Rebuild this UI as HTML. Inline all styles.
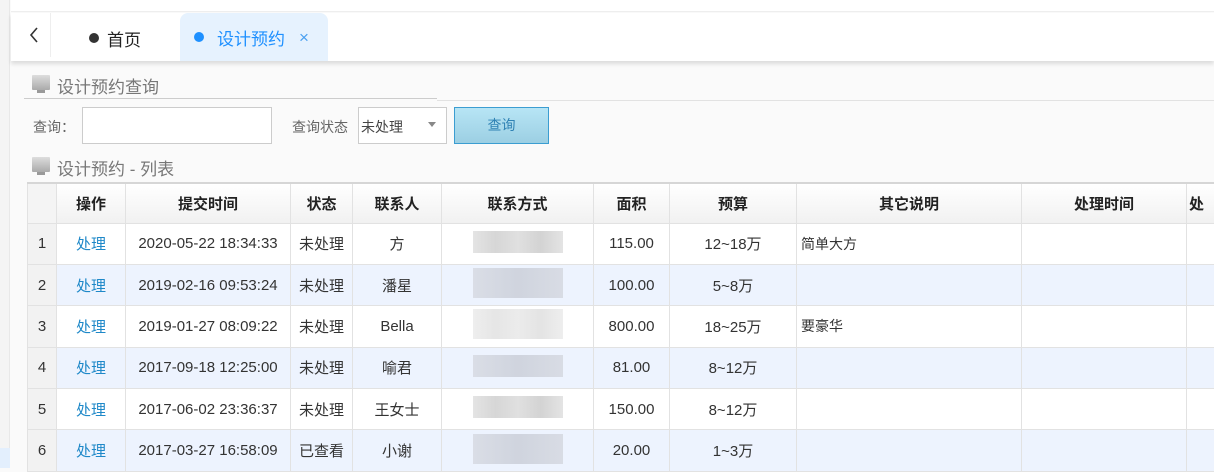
<!DOCTYPE html><html><head><meta charset="utf-8"><style>
*{margin:0;padding:0;box-sizing:border-box}
body{width:1214px;height:468px;overflow:hidden;background:#fafafa;font-family:"Liberation Sans","Noto Sans CJK SC",sans-serif;position:relative;font-size:14px;color:#333}
.a{position:absolute}
.ic{position:absolute;width:18px;height:15px;background:linear-gradient(#ddd,#aaa);border-radius:1px}
.ic:after{content:"";position:absolute;left:5px;top:15px;width:8px;height:3px;background:#999}
table{position:absolute;left:27px;top:182px;border-collapse:collapse;table-layout:fixed;width:1200px;background:#fff}
td,th{border:1px solid #e2e2e2;text-align:center;white-space:nowrap;overflow:hidden;font-size:15px}
th{height:40px;background:linear-gradient(#fff,#f1f1f1);font-weight:bold;color:#222;border-top:2px solid #d6d6d6;font-size:15px}
td{height:41.4px;color:#333}
tr.e td{background:#edf3fe}
td.n{background:#f2f2f2!important}
td.l{color:#1e88c8}
td.t{text-align:left;padding-left:4px;font-size:14px}
.bl{display:inline-block;width:90px;height:22px;background:linear-gradient(90deg,#ddd,#ccc,#d8d8d8,#c8c8c8,#ddd);opacity:.8}
tr.e .bl{background:linear-gradient(90deg,#d5d8e0,#c8ccd6,#d3d6de)}
</style></head><body>
<div class="a" style="left:0;top:0;width:10px;height:468px;background:#f4f4f4;border-right:1px solid #e8e8e8"></div>
<div class="a" style="left:0;top:448px;width:10px;height:20px;background:#e3effd"></div>
<div class="a" style="left:11px;top:0;width:1203px;height:12px;background:#fff;border-bottom:1px solid #eee"></div>
<div class="a" style="left:11px;top:13px;width:1203px;height:48px;background:#fff;box-shadow:0 3px 4px rgba(0,0,0,.12)"></div>
<div class="a" style="left:50px;top:13px;width:1px;height:44px;background:#eee"></div>
<svg class="a" style="left:28px;top:27px" width="12" height="16"><path d="M9 1L3 8l6 7" fill="none" stroke="#333" stroke-width="1.6"/></svg>
<div class="a" style="left:89px;top:33px;width:10px;height:10px;border-radius:50%;background:#333"></div>
<div class="a" style="left:107px;top:26px;font-size:17px;color:#222">首页</div>
<div class="a" style="left:180px;top:13px;width:148px;height:48px;background:#e6f2fe;border-radius:8px 8px 0 0"></div>
<div class="a" style="left:194px;top:32px;width:10px;height:10px;border-radius:50%;background:#1e90ff"></div>
<div class="a" style="left:217px;top:25px;font-size:17px;color:#1e90ff">设计预约</div>
<div class="a" style="left:299px;top:28px;font-size:17px;color:#4aa0f0">×</div>
<div class="ic" style="left:32px;top:75px"></div>
<div class="a" style="left:57px;top:73px;font-size:17px;color:#777">设计预约查询</div>
<div class="a" style="left:24px;top:98px;width:413px;height:1px;background:#ccc"></div>
<div class="a" style="left:437px;top:100px;width:777px;height:1px;background:#e2e2e2"></div>
<div class="a" style="left:33px;top:117px;color:#666;font-size:14px">查询：</div>
<div class="a" style="left:82px;top:107px;width:190px;height:37px;background:#fff;border:1px solid #ccc"></div>
<div class="a" style="left:292px;top:117px;color:#666;font-size:14px">查询状态</div>
<div class="a" style="left:358px;top:107px;width:89px;height:37px;background:#fff;border:1px solid #ccc"></div>
<div class="a" style="left:361px;top:117px;color:#444;font-size:14px">未处理</div>
<div class="a" style="left:428px;top:122px;border:4px solid transparent;border-top:5px solid #888"></div>
<div class="a" style="left:454px;top:107px;width:95px;height:37px;background:linear-gradient(#b7e5f5,#9ccfe3);border:1px solid #3b9dd1;text-align:center;line-height:35px;color:#2f82b4;font-size:14px">查询</div>
<div class="ic" style="left:32px;top:157px"></div>
<div class="a" style="left:57px;top:155px;font-size:17px;color:#777">设计预约 - 列表</div>
<table>
<colgroup><col style="width:29px"><col style="width:69px"><col style="width:165px"><col style="width:62px"><col style="width:89px"><col style="width:152px"><col style="width:76px"><col style="width:127px"><col style="width:225px"><col style="width:165px"><col style="width:41px"></colgroup>
<tr><th style="background:#f4f4f4"></th><th>操作</th><th>提交时间</th><th>状态</th><th>联系人</th><th>联系方式</th><th>面积</th><th>预算</th><th>其它说明</th><th>处理时间</th><th style="text-align:left;padding-left:2px">处</th></tr>
<tr><td class="n">1</td><td class="l">处理</td><td>2020-05-22 18:34:33</td><td>未处理</td><td>方</td><td><span class="bl"></span></td><td>115.00</td><td>12~18万</td><td class="t">简单大方</td><td></td><td></td></tr>
<tr class="e"><td class="n">2</td><td class="l">处理</td><td>2019-02-16 09:53:24</td><td>未处理</td><td>潘星</td><td><span class="bl" style="height:30px"></span></td><td>100.00</td><td>5~8万</td><td></td><td></td><td></td></tr>
<tr><td class="n">3</td><td class="l">处理</td><td>2019-01-27 08:09:22</td><td>未处理</td><td>Bella</td><td><span class="bl" style="height:30px;opacity:.5"></span></td><td>800.00</td><td>18~25万</td><td class="t">要豪华</td><td></td><td></td></tr>
<tr class="e"><td class="n">4</td><td class="l">处理</td><td>2017-09-18 12:25:00</td><td>未处理</td><td>喻君</td><td><span class="bl"></span></td><td>81.00</td><td>8~12万</td><td></td><td></td><td></td></tr>
<tr><td class="n">5</td><td class="l">处理</td><td>2017-06-02 23:36:37</td><td>未处理</td><td>王女士</td><td><span class="bl"></span></td><td>150.00</td><td>8~12万</td><td></td><td></td><td></td></tr>
<tr class="e"><td class="n">6</td><td class="l">处理</td><td>2017-03-27 16:58:09</td><td>已查看</td><td>小谢</td><td><span class="bl" style="height:30px"></span></td><td>20.00</td><td>1~3万</td><td></td><td></td><td></td></tr>
</table>
</body></html>
